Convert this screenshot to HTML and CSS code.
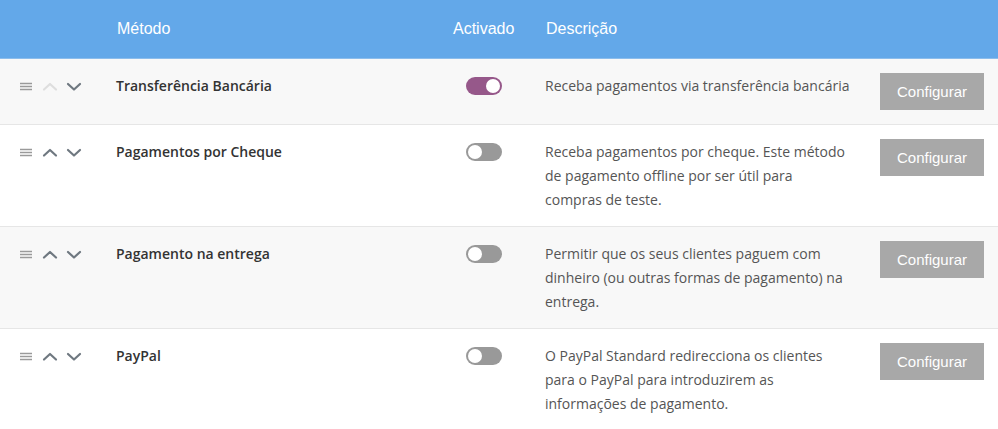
FILE: index.html
```html
<!DOCTYPE html>
<html lang="pt">
<head>
<meta charset="utf-8">
<title>Métodos de pagamento</title>
<link rel="stylesheet" href="styles.css">
</head>
<body>
<div class="table">
  <div class="row head">
    <div class="c-sort"></div>
    <div class="c-name">Método</div>
    <div class="c-toggle">Activado</div>
    <div class="c-desc">Descrição</div>
    <div class="c-action"></div>
  </div>

  <div class="row alt">
    <div class="c-sort">
      <svg class="ico" width="62" height="14" viewBox="0 0 62 14">
        <g class="bars"><path d="M20 4.5h12M20 7.5h12M20 10.5h12"/></g>
        <path class="chev off" d="M44 10.5l6-5.5 6 5.5"/>
        <path class="chev" d="M68 5l6 5.5 6-5.5"/>
      </svg>
    </div>
    <div class="c-name name">Transferência Bancária</div>
    <div class="c-toggle"><span class="switch on"></span></div>
    <div class="c-desc">Receba pagamentos via transferência bancária</div>
    <div class="c-action"><button class="btn">Configurar</button></div>
  </div>

  <div class="row">
    <div class="c-sort">
      <svg class="ico" width="62" height="14" viewBox="0 0 62 14">
        <g class="bars"><path d="M20 4.5h12M20 7.5h12M20 10.5h12"/></g>
        <path class="chev" d="M44 10.5l6-5.5 6 5.5"/>
        <path class="chev" d="M68 5l6 5.5 6-5.5"/>
      </svg>
    </div>
    <div class="c-name name">Pagamentos por Cheque</div>
    <div class="c-toggle"><span class="switch"></span></div>
    <div class="c-desc">Receba pagamentos por cheque. Este método de pagamento offline por ser útil para compras de teste.</div>
    <div class="c-action"><button class="btn">Configurar</button></div>
  </div>

  <div class="row alt">
    <div class="c-sort">
      <svg class="ico" width="62" height="14" viewBox="0 0 62 14">
        <g class="bars"><path d="M20 4.5h12M20 7.5h12M20 10.5h12"/></g>
        <path class="chev" d="M44 10.5l6-5.5 6 5.5"/>
        <path class="chev" d="M68 5l6 5.5 6-5.5"/>
      </svg>
    </div>
    <div class="c-name name">Pagamento na entrega</div>
    <div class="c-toggle"><span class="switch"></span></div>
    <div class="c-desc">Permitir que os seus clientes paguem com dinheiro (ou outras formas de pagamento) na entrega.</div>
    <div class="c-action"><button class="btn">Configurar</button></div>
  </div>

  <div class="row">
    <div class="c-sort">
      <svg class="ico" width="62" height="14" viewBox="0 0 62 14">
        <g class="bars"><path d="M20 4.5h12M20 7.5h12M20 10.5h12"/></g>
        <path class="chev" d="M44 10.5l6-5.5 6 5.5"/>
        <path class="chev" d="M68 5l6 5.5 6-5.5"/>
      </svg>
    </div>
    <div class="c-name name">PayPal</div>
    <div class="c-toggle"><span class="switch"></span></div>
    <div class="c-desc">O PayPal Standard redirecciona os clientes para o PayPal para introduzirem as informações de pagamento.</div>
    <div class="c-action"><button class="btn">Configurar</button></div>
  </div>
</div>
</body>
</html>
```

FILE: styles.css
```css
* { box-sizing: border-box; }
html, body { margin: 0; padding: 0; background: #fff; }
body {
  font-family: "Open Sans", "Noto Sans", sans-serif;
  font-size: 14px;
  color: #555;
}
.table { width: 998px; }
.row {
  display: grid;
  grid-template-columns: 116px 337px 92px 335px 118px;
  align-items: start;
  padding: 15px 0 14px;
  border-bottom: 1px solid #e6e6e6;
  background: #fff;
}
.row.alt { background: #f8f8f8; }
.row.head {
  background: #63a8e9;
  border-bottom: 1px solid #8cbdec;
  height: 59px;
  padding: 0 0 1px;
  align-items: center;
  font-family: "Liberation Sans", Arial, sans-serif;
  font-size: 16px;
  color: #fff;
}
.row.head .c-name { padding-left: 1px; }
.row.head .c-desc { padding-left: 1px; }
.c-name, .c-desc, .c-toggle { line-height: 24px; }
.c-desc { padding-right: 28px; }
.name { font-weight: 600; color: #333; }
.c-sort { height: 24px; display: flex; align-items: center; }
.ico { display: block; overflow: visible; margin-top: -1px; }
.ico .bars path { stroke: #9a9a9a; stroke-width: 1.6; fill: none; }
.chev { stroke: #6f7880; stroke-width: 2.2; fill: none; stroke-linecap: round; stroke-linejoin: round; }
.chev.off { stroke: #dedede; }
.c-toggle { display: flex; align-items: center; height: 24px; }
.switch {
  position: relative;
  display: inline-block;
  width: 36px;
  height: 18px;
  margin-left: 13px;
  margin-top: -1px;
  border-radius: 9px;
  background: #999;
}
.switch::after {
  content: "";
  position: absolute;
  top: 2px;
  left: 2px;
  width: 14px;
  height: 14px;
  border-radius: 50%;
  background: #fff;
}
.switch.on { background: #96588a; }
.switch.on::after { left: 20px; }
.btn {
  display: block;
  width: 104px;
  height: 37px;
  margin-top: -1px;
  border: 0;
  border-radius: 0;
  padding: 0;
  background: #a8a8a8;
  color: #fff;
  font-family: "Liberation Sans", Arial, sans-serif;
  font-size: 15px;
  cursor: pointer;
}
```
